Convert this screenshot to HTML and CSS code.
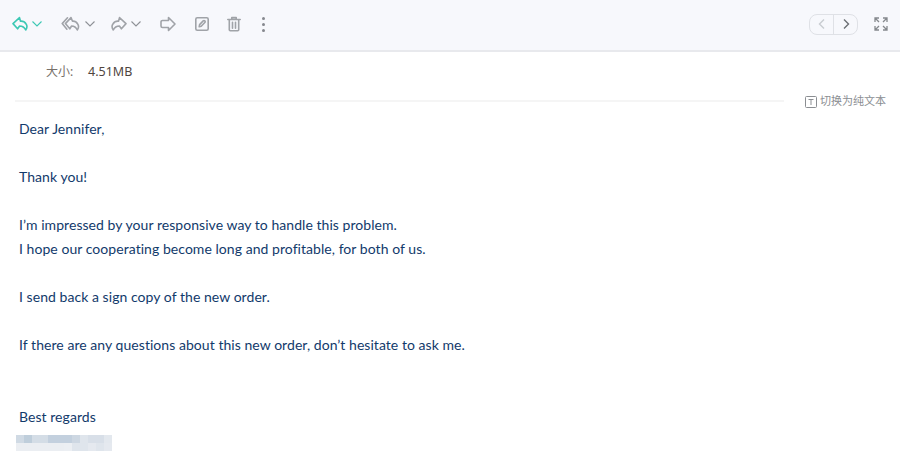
FILE: index.html
```html
<!DOCTYPE html>
<html lang="zh">
<head>
<meta charset="utf-8">
<title>邮件</title>
<link rel="stylesheet" href="styles.css">
</head>
<body>
<header class="toolbar">
  <div class="tools">
    <button class="tool tool-first active">
      <svg class="ico" viewBox="0 0 16 16"><path d="M7.500 1.600 1 7.600l4.600 5.200 2-2.800c2.400 0 4.700 1 6.100 4 1.200-1.700 1.500-4.400.4-6-1.300-2-3.600-3-5.600-2.800z"/></svg>
      <svg class="chev" viewBox="0 0 12 12"><path d="M1.500 3.500 6 8l4.500-4.500"/></svg>
    </button>
    <button class="tool tool-all">
      <svg class="ico wide" viewBox="0 0 20 16"><path d="M10 1.600 4.400 7.600l4.400 5.200 1.800-2.800c2.200 0 4.300 1 5.700 4 1.200-1.700 1.500-4.400.4-6-1.300-2-3.300-3-5.200-2.800z"/><path d="M6.500 1.800 1.200 7.600l4.700 5.600"/></svg>
      <svg class="chev" viewBox="0 0 12 12"><path d="M1.500 3.500 6 8l4.500-4.500"/></svg>
    </button>
    <button class="tool tool-fwd">
      <svg class="ico" viewBox="0 0 16 16"><path d="M8.500 1.600 15 7.600l-4.600 5.200-2-2.800c-2.400 0-4.700 1-6.100 4-1.200-1.700-1.500-4.400-.4-6 1.300-2 3.600-3 5.600-2.800z"/></svg>
      <svg class="chev" viewBox="0 0 12 12"><path d="M1.500 3.500 6 8l4.500-4.500"/></svg>
    </button>
    <button class="tool tool-next">
      <svg class="ico" viewBox="0 0 16 16"><path d="M8.500 1.500 15 8l-6.500 6.500v-3H2.500a1.500 1.500 0 0 1-1.500-1.500V6a1.500 1.500 0 0 1 1.500-1.500h6z"/></svg>
    </button>
    <button class="tool tool-edit">
      <svg class="ico" viewBox="0 0 16 16"><rect x="1.800" y="1.800" width="12.400" height="12.400" rx="1.500"/><path d="m5.200 10.800.4-2.200 3.600-3.700c.5-.5 1.100-.5 1.600 0s.5 1.100 0 1.600L7.200 10.300z"/></svg>
    </button>
    <button class="tool tool-del">
      <svg class="ico" viewBox="0 0 16 16"><path d="M1.800 3.500h12.400M5.800 3.200V1.600h4.400v1.600M3.300 3.500v10.300a1 1 0 0 0 1 1h7.400a1 1 0 0 0 1-1V3.500M6.500 6.200v6M9.500 6.200v6"/></svg>
    </button>
    <button class="tool tool-more">
      <span class="dot"></span><span class="dot"></span><span class="dot"></span>
    </button>
  </div>
  <div class="tools-right">
    <div class="pager">
      <button class="page page-prev"><svg viewBox="0 0 12 12"><path d="M8 1.500 3.500 6 8 10.500"/></svg></button>
      <button class="page page-next"><svg viewBox="0 0 12 12"><path d="M4 1.500 8.500 6 4 10.500"/></svg></button>
    </div>
    <svg class="expand" viewBox="0 0 14 14"><path d="M1 5V1h4M1 1l4 4M9 1h4v4M13 1 9 5M1 9v4h4M1 13l4-4M13 9v4H9M13 13 9 9"/></svg>
  </div>
</header>
<section class="meta">
  <span class="meta-label">大小:</span>
  <span class="meta-value">4.51MB</span>
</section>
<div class="rule-row">
  <div class="rule"></div>
  <a class="plain-link">
    <svg viewBox="0 0 12 12"><rect x=".5" y=".5" width="11" height="11" rx="1"/><path d="M3.500 3.500h5M6 3.500v5.500"/></svg>
    切换为纯文本
  </a>
</div>
<main class="mail">
  <p>Dear Jennifer,</p>
  <p class="gap"></p>
  <p>Thank you!</p>
  <p class="gap"></p>
  <p>I’m impressed by your responsive way to handle this problem.</p>
  <p>I hope our cooperating become long and profitable, for both of us.</p>
  <p class="gap"></p>
  <p>I send back a sign copy of the new order.</p>
  <p class="gap"></p>
  <p>If there are any questions about this new order, don’t hesitate to ask me.</p>
  <p class="gap"></p>
  <p class="gap"></p>
  <p>Best regards</p>
  <div class="mosaic"></div>
</main>
</body>
</html>
```

FILE: styles.css
```css
* { box-sizing: border-box; }
html, body { margin: 0; height: 100%; }
body { background: #fff; font-family: "Noto Sans", "Noto Sans CJK SC", sans-serif; overflow: hidden; }
button { border: 0; padding: 0; background: none; display: flex; align-items: center; }
.toolbar { height: 52px; background: #f7f8fc; border-bottom: 2px solid #e8e9ed; display: flex; align-items: center; justify-content: space-between; padding: 0 12px 2px 12px; }
.tools { display: flex; align-items: center; }
.tools-right { display: flex; align-items: center; gap: 16px; }
.tool { gap: 3px; }
.ico { width: 16px; height: 16px; fill: none; stroke: #a0a3a8; stroke-width: 1.600; stroke-linejoin: round; stroke-linecap: round; }
.ico.wide { width: 20px; }
.chev { width: 12px; height: 12px; fill: none; stroke: #8e9196; stroke-width: 1.100; }
.active .ico, .active .chev { stroke: #3cc8b4; }
.tool-all { margin-left: 18px; }
.tool-fwd { margin-left: 15px; }
.tool-next { margin-left: 18px; }
.tool-edit { margin-left: 18px; }
.tool-del { margin-left: 16px; }
.tool-more { margin-left: 20px; flex-direction: column; gap: 3px; }
.dot { width: 3px; height: 3px; border-radius: 50%; background: #85888e; }
.pager { width: 49px; height: 21px; border: 1.500px solid #dfe1e6; border-radius: 8px; display: flex; }
.page { flex: 1; justify-content: center; }
.page svg { width: 12px; height: 12px; fill: none; stroke-width: 1.400; }
.page-prev { border-right: 1.500px solid #dfe1e6; }
.page-prev svg { stroke: #c9ccd1; }
.page-next svg { stroke: #6c6f74; }
.expand { width: 14px; height: 14px; fill: none; stroke: #85888d; stroke-width: 1.300; }
.meta { height: 38px; padding: 0 0 0 46px; display: flex; align-items: center; font-size: 12px; }
.meta-label { color: #77706a; width: 42px; }
.meta-value { color: #4f453e; font-size: 12.500px; }
.rule-row { height: 27px; display: flex; align-items: flex-start; padding-left: 15px; }
.rule { width: 769px; height: 2px; margin-top: 10px; background: #f5f5f5; }
.plain-link { margin-left: 21px; margin-top: 3px; display: flex; align-items: center; gap: 3px; font-size: 11px; line-height: 16px; color: #8b8e92; }
.plain-link svg { width: 12px; height: 12px; margin-top: 2px; fill: none; stroke: #8b8e92; stroke-width: 1; }
.mail { padding-left: 19px; color: #123a6b; font-family: Lato, "Noto Sans", sans-serif; font-size: 14px; letter-spacing: .05px; font-variant-ligatures: none; }
.mail p { margin: 0; height: 24px; line-height: 24px; }
.mosaic {
  width: 96px; height: 16px; margin-left: -3px; margin-top: 6px;
  background-size: 96px 8px; background-repeat: no-repeat; background-position: 0 0, 0 8px;
  background-image:
    linear-gradient(90deg, #d0dae4 0 8px, #bfcedb 8px 16px, #d4dde6 16px 32px, #c3d0de 32px 56px, #cdd7e2 56px 64px, #dfe5ec 64px 72px, #d8dfe8 72px 88px, #e3e8ee 88px),
    linear-gradient(90deg, #ebeef2 0 48px, #eceff3 48px 56px, #dfe5ec 56px 72px, #e5e9ef 72px 80px, #dfe5ec 80px 88px, #e5e9ef 88px);
}
```
